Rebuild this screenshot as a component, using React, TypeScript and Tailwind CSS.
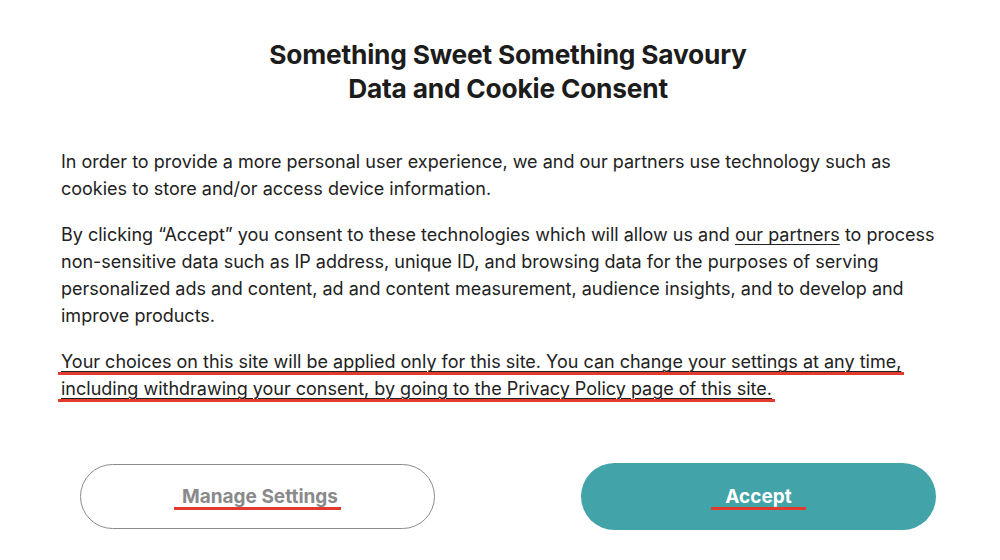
const red = "border-b-[3px] border-[#e23b2e]"

export default function App() {
  return (
    <div className="min-h-[560px] w-full bg-white font-['Inter','Liberation_Sans',sans-serif] text-[#222]">
      <div className="pl-[61px] pr-[45px] pt-[38px]">
        <h1 className="text-center text-[26.3px] font-bold leading-[34px] tracking-[-0.2px] text-[#1c1c1c]">
          Something Sweet Something Savoury
          <br />
          Data and Cookie Consent
        </h1>

        <div className="mt-[43px] flex flex-col gap-[20px] text-[18px] leading-[26.7px]">
          <p>
            In order to provide a more personal user experience, we and our partners use technology
            such as cookies to store and/or access device information.
          </p>
          <p>
            By clicking “Accept” you consent to these technologies which will allow us and{" "}
            <a className="underline underline-offset-[3px] decoration-1">our partners</a> to process
            non-sensitive data such as IP address, unique ID, and browsing data for the purposes of
            serving personalized ads and content, ad and content measurement, audience insights, and
            to develop and improve products.
          </p>
          <p className="underline underline-offset-[3px] decoration-1">
            <span className={`${red} box-decoration-clone -mx-[3px] px-[3px]`}>
              Your choices on this site will be applied only for this site. You can change your
              settings at any time, including withdrawing your consent, by going to the Privacy
              Policy page of this site.
            </span>
          </p>
        </div>

        <div className="mt-[60px] flex items-center justify-between px-[19px]">
          <button className="flex h-[65px] w-[355px] items-center justify-center rounded-full border border-[#8c8c8c] bg-white pt-[4px] text-[19px] font-bold text-[#8a8a8a]">
            <span className={`${red} pl-2 pr-[3px] leading-[20px]`}>Manage Settings</span>
          </button>
          <button className="flex h-[67px] w-[355px] items-center justify-center rounded-full bg-[#42a3a8] pt-[4px] text-[19px] font-bold text-white">
            <span className={`${red} px-[14px] leading-[20px]`}>Accept</span>
          </button>
        </div>
      </div>
    </div>
  )
}
